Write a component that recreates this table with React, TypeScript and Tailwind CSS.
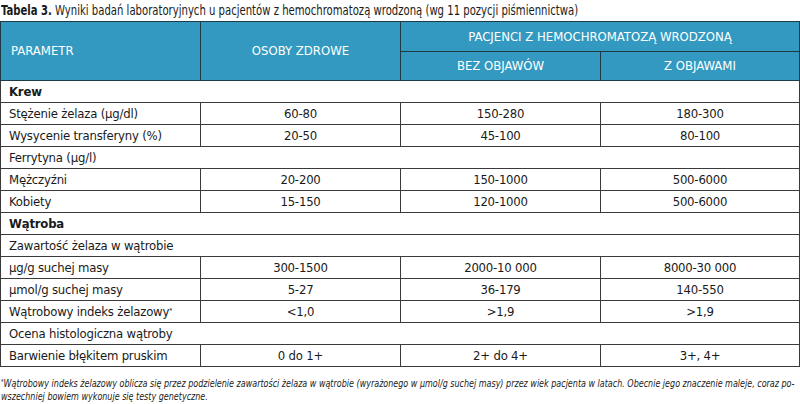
const FONT = "font-['DejaVu_Sans_Condensed','Liberation_Sans',sans-serif]";

type Row =
  | { kind: "section"; label: string }
  | { kind: "span"; label: string }
  | { kind: "data"; label: React.ReactNode; values: [string, string, string] };

const ROWS: Row[] = [
  { kind: "section", label: "Krew" },
  { kind: "data", label: "Stężenie żelaza (µg/dl)", values: ["60-80", "150-280", "180-300"] },
  { kind: "data", label: "Wysycenie transferyny (%)", values: ["20-50", "45-100", "80-100"] },
  { kind: "span", label: "Ferrytyna (µg/l)" },
  { kind: "data", label: "Mężczyźni", values: ["20-200", "150-1000", "500-6000"] },
  { kind: "data", label: "Kobiety", values: ["15-150", "120-1000", "500-6000"] },
  { kind: "section", label: "Wątroba" },
  { kind: "span", label: "Zawartość żelaza w wątrobie" },
  { kind: "data", label: "µg/g suchej masy", values: ["300-1500", "2000-10 000", "8000-30 000"] },
  { kind: "data", label: "µmol/g suchej masy", values: ["5-27", "36-179", "140-550"] },
  {
    kind: "data",
    label: (
      <>
        Wątrobowy indeks żelazowy<sup className="text-[7px]">*</sup>
      </>
    ),
    values: ["<1,0", ">1,9", ">1,9"],
  },
  { kind: "span", label: "Ocena histologiczna wątroby" },
  { kind: "data", label: "Barwienie błękitem pruskim", values: ["0 do 1+", "2+ do 4+", "3+, 4+"] },
];

export default function App() {
  return (
    <div className={`w-[800px] h-[404px] overflow-hidden bg-white text-[#1a1a1a] ${FONT}`}>
      <div className="h-[21px] pl-[1px] pt-[2px]">
        <p className="origin-left scale-x-[0.83] whitespace-nowrap text-[13.5px] leading-[16px]">
          <span className="font-bold">Tabela 3.</span> Wyniki badań laboratoryjnych u pacjentów z hemochromatozą wrodzoną (wg 11 pozycji piśmiennictwa)
        </p>
      </div>
      <table className="w-[799px] table-fixed border-collapse text-[13px] tracking-[-0.2px]">
        <colgroup>
          <col className="w-[200px]" />
          <col className="w-[200px]" />
          <col className="w-[200px]" />
          <col className="w-[199px]" />
        </colgroup>
        <thead className="bg-[#3399c0] tracking-normal text-white">
          <tr className="h-[30px]">
            <th rowSpan={2} className="border border-[#1d3a47] pl-[10px] text-left font-normal">
              PARAMETR
            </th>
            <th rowSpan={2} className="border border-[#1d3a47] font-normal">
              OSOBY ZDROWE
            </th>
            <th colSpan={2} className="border border-[#1d3a47] font-normal">
              PACJENCI Z HEMOCHROMATOZĄ WRODZONĄ
            </th>
          </tr>
          <tr className="h-[29px]">
            <th className="border border-[#1d3a47] font-normal">BEZ OBJAWÓW</th>
            <th className="border border-[#1d3a47] font-normal">Z OBJAWAMI</th>
          </tr>
        </thead>
        <tbody>
          {ROWS.map((r, i) =>
            r.kind === "data" ? (
              <tr key={i} className="h-[22px]">
                <td className="border border-[#3a3a3a] pl-[8px] leading-none">{r.label}</td>
                {r.values.map((v, j) => (
                  <td key={j} className="border border-[#3a3a3a] text-center leading-none">
                    {v}
                  </td>
                ))}
              </tr>
            ) : (
              <tr key={i} className="h-[22px]">
                <td
                  colSpan={4}
                  className={`border border-[#3a3a3a] pl-[8px] leading-none ${r.kind === "section" ? "font-bold" : ""}`}
                >
                  {r.label}
                </td>
              </tr>
            ),
          )}
        </tbody>
      </table>
      <div className="mt-[10px] pl-[1px] text-[11px] italic leading-[13px] text-[#222]">
        <p className="origin-left scale-x-[0.81] whitespace-nowrap">
          <sup className="text-[7px]">*</sup>Wątrobowy indeks żelazowy oblicza się przez podzielenie zawartości żelaza w wątrobie (wyrażonego w µmol/g suchej masy) przez wiek pacjenta w latach. Obecnie jego znaczenie maleje, coraz po-
        </p>
        <p className="origin-left scale-x-[0.81] whitespace-nowrap">wszechniej bowiem wykonuje się testy genetyczne.</p>
      </div>
    </div>
  );
}
